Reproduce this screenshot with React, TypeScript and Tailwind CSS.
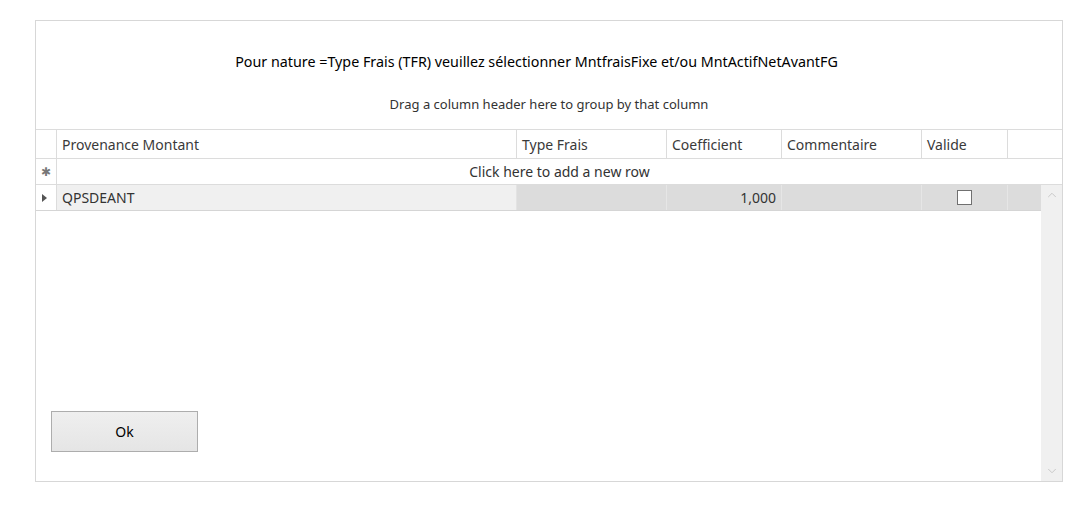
import { ChevronUp, ChevronDown } from "lucide-react";

const font = { fontFamily: '"Noto Sans", "Open Sans", sans-serif' };

const columns = [
  { label: "Provenance Montant", w: "w-[460px]" },
  { label: "Type Frais", w: "w-[150px]" },
  { label: "Coefficient", w: "w-[115px]" },
  { label: "Commentaire", w: "w-[140px]" },
  { label: "Valide", w: "w-[86px]" },
];

export default function App() {
  return (
    <div className="w-[1086px] h-[516px] bg-white pt-[20px] pl-[35px]" style={font}>
      <div className="w-[1028px] h-[462px] border border-[#d7d7d7] flex flex-col">
        {/* message + group panel */}
        <div className="h-[108px] flex flex-col items-center">
          <p className="mt-[31px] pr-[25px] text-[14.3px] text-black leading-[20px]">
            Pour nature =Type Frais (TFR) veuillez sélectionner MntfraisFixe et/ou MntActifNetAvantFG
          </p>
          <p className="mt-[23px] text-[13px] text-[#333] leading-[18px]">
            Drag a column header here to group by that column
          </p>
        </div>

        {/* column headers */}
        <div className="flex h-[30px] border-t border-b border-[#dcdcdc] text-[14px] text-[#3a3a3a]">
          <div className="w-[21px] border-r border-[#dcdcdc]" />
          {columns.map((c) => (
            <div key={c.label} className={`${c.w} border-r border-[#dcdcdc] px-[5px] flex items-center`}>
              {c.label}
            </div>
          ))}
          <div className="flex-1" />
        </div>

        {/* new row */}
        <div className="flex h-[26px] border-b border-[#dcdcdc] text-[14px] text-[#333]">
          <div className="w-[21px] border-r border-[#dcdcdc] flex items-center justify-center text-[#777] text-[12px]">
            ✱
          </div>
          <div className="flex-1 flex items-center justify-center">Click here to add a new row</div>
        </div>

        <div className="flex-1 flex min-h-0">
          <div className="flex-1 flex flex-col">
            {/* data row */}
            <div className="flex h-[26px] border-b border-[#d5d5d5] text-[14px] text-[#333]">
              <div className="w-[21px] border-r border-[#dcdcdc] flex items-center justify-center pr-[3px]">
                <svg width="5" height="8" viewBox="0 0 5 8">
                  <path d="M0 0 L5 4 L0 8 Z" fill="#555" />
                </svg>
              </div>
              <div className="w-[460px] bg-[#f0f0f0] border-r border-[#e3e3e3] px-[5px] flex items-center">
                QPSDEANT
              </div>
              <div className="w-[150px] bg-[#dcdcdc] border-r border-[#e6e6e6]" />
              <div className="w-[115px] bg-[#dcdcdc] border-r border-[#e6e6e6] px-[5px] flex items-center justify-end">
                1,000
              </div>
              <div className="w-[140px] bg-[#dcdcdc] border-r border-[#e6e6e6]" />
              <div className="w-[86px] bg-[#dcdcdc] border-r border-[#e6e6e6] flex items-center justify-center">
                <div className="w-[15px] h-[15px] bg-white border border-[#707070]" />
              </div>
              <div className="flex-1 bg-[#dcdcdc]" />
            </div>

            <div className="flex-1" />

            <button className="ml-[15px] mb-[29px] w-[147px] h-[41px] border border-[#adadad] bg-gradient-to-b from-[#efefef] to-[#e5e5e5] text-[14px] text-black">
              Ok
            </button>
          </div>

          {/* vertical scrollbar */}
          <div className="w-[21px] bg-[#f0f0f0] flex flex-col items-center justify-between py-[3px]">
            <ChevronUp size={14} strokeWidth={1.5} className="text-[#c2c2c2]" />
            <ChevronDown size={14} strokeWidth={1.5} className="text-[#c2c2c2]" />
          </div>
        </div>
      </div>
    </div>
  );
}
